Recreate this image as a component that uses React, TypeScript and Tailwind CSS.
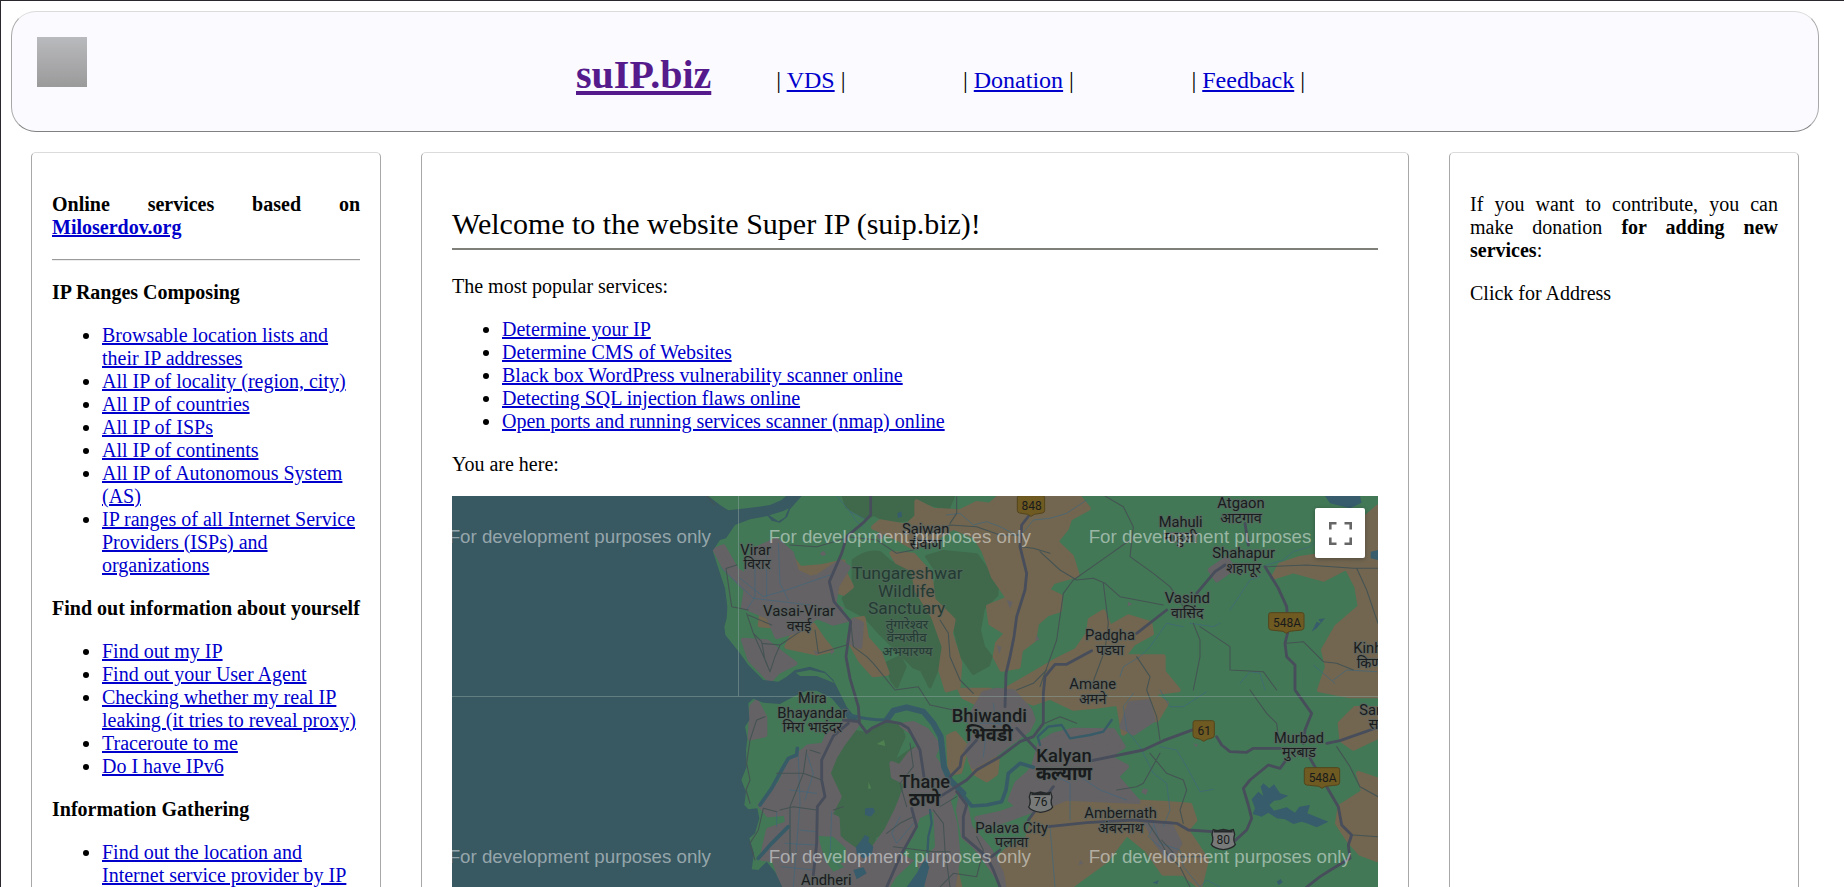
import React from "react";

const link = "text-[#0000cc] underline";

const ipRanges = [
  "Browsable location lists and their IP addresses",
  "All IP of locality (region, city)",
  "All IP of countries",
  "All IP of ISPs",
  "All IP of continents",
  "All IP of Autonomous System (AS)",
  "IP ranges of all Internet Service Providers (ISPs) and organizations",
];
const yourself = [
  "Find out my IP",
  "Find out your User Agent",
  "Checking whether my real IP leaking (it tries to reveal proxy)",
  "Traceroute to me",
  "Do I have IPv6",
];
const gathering = ["Find out the location and Internet service provider by IP"];
const popular = [
  "Determine your IP",
  "Determine CMS of Websites",
  "Black box WordPress vulnerability scanner online",
  "Detecting SQL injection flaws online",
  "Open ports and running services scanner (nmap) online",
];

function Links({ items }: { items: string[] }) {
  return (
    <ul className="mb-5 list-disc pl-[50px]">
      {items.map((t) => (
        <li key={t}>
          <a href="#" className={link}>{t}</a>
        </li>
      ))}
    </ul>
  );
}

const forest = [
  "M430 18H518L560 92 520 72 500 85 440 50Z",
  "M518 18H760L745 55 700 45 655 32 648 85 600 92 560 92Z",
  "M460 212Q500 180 540 188L570 215 620 240 660 285 700 300 715 250 680 200 730 185 830 195 870 250 892 290 890 315 850 355 838 420 850 470 873 500 865 525 820 550 785 500 760 400 720 345 695 390 722 470 715 530 690 590 665 540 640 530 600 490 540 430 495 380 440 350 430 325 460 280Z",
  "M440 720 500 732 560 698 600 705 612 740 590 790 575 830 580 860 620 870 590 960 560 1020 525 1040 515 1075 480 1090 430 1055 412 1020 415 985 395 975 418 920 385 850 405 800 398 755Z",
  "M590 810 640 775 650 800 620 850 595 845Z",
  "M560 520 600 500 615 530 590 590 575 570Z",
];
const brown = [
  "M650 35 700 60 780 65 830 40 870 45 900 18H1135L1165 55 1110 85 1100 115 1068 155 1115 200 1132 255 1060 275 1042 300 1082 320 1080 360 1042 372 1010 400 1002 450 962 480 955 530 905 538 885 500 892 460 920 430 872 400 865 350 925 325 880 260 850 180 825 140 760 112 700 150 640 172 600 150 560 130 520 112 540 95 620 108 650 80Z",
  "M575 190 640 195 690 250 700 330 760 390 752 430 780 520 775 590 740 600 722 540 732 470 700 380 650 300 640 240 590 215Z",
  "M460 390 490 385 500 445 540 490 562 550 520 555 480 510 450 455Z",
  "M255 175 300 235 360 230 430 215 405 250 350 265 290 250Z",
  "M190 335 245 330 250 360 215 390 240 410 180 405Z",
  "M340 405 370 450 395 480 350 490 260 470 285 420Z",
  "M400 300 435 250 455 290 430 310Z",
  "M1130 480 1165 430 1170 390 1210 365 1230 412 1285 380 1350 400 1355 430 1300 460 1270 500 1390 500 1390 545 1435 600 1350 610 1400 640 1370 690 1320 690 1270 730 1255 640 1180 650 1120 655 1050 622 1000 640 950 620 915 600 1010 545 1070 510Z",
  "M2034 50 2000 80 1990 160 1900 190 1800 205 1740 225 1720 262 1780 243 1870 268 1940 232 1970 290 1980 350 1910 410 1870 480 1882 530 1858 600 1950 618H2034Z",
  "M1965 655 1920 700 1925 750 1960 775 2034 740V655Z",
  "M1975 850 2034 870V1110L1980 1090 1945 1050 1912 1000 1920 950 1990 905Z",
  "M1010 955 1100 925 1300 935 1400 940 1470 945 1485 990 1460 1020 1520 1110 1500 1191 1450 1150 1390 1150 1340 1080 1280 1030 1220 1110 1110 1191H920L880 1120 920 1080 980 1050Z",
  "M745 740 765 730 800 770 780 845 750 850Z",
  "M810 810 860 775 892 810 888 850 860 870 825 850Z",
  "M740 1050 770 1060 765 1130 780 1191H740Z",
  "M780 600H870L830 640 790 620Z",
  "M370 770 410 765 395 800Z",
];
const urban = [
  "M160 180 230 150 275 190 290 245 340 268 420 215 445 232 410 290 402 345 440 390 400 400 350 380 300 420 230 440 205 380 130 350 138 300 75 235 45 180 70 170 110 240 135 255 150 215Z",
  "M130 450 200 455 245 490 285 520 235 545 210 572 150 510Z",
  "M155 650 170 635 195 682 195 735 150 745Z",
  "M300 790 325 770 370 765 380 740 440 690 475 700 430 760 405 800 385 850 418 920 390 975 412 985 415 1040 430 1055 480 1090 520 1075 560 1020 590 960 622 880 580 860 575 820 600 830 630 790 660 770 640 730 605 705 640 700 680 720 715 765 700 800 735 850 765 905 745 930 765 1000 775 1100 760 1191H690L640 1160 560 1191H250L222 1110 185 1105 205 1020 262 1000 258 970 205 975 180 945 240 880 268 820Z",
  "M785 900 800 960 810 1010 870 1080 905 1150 912 1191 870 1130 825 1070 790 1040 775 960Z",
  "M850 610 890 600 940 605 990 660 1000 690 985 720 930 760 890 790 820 830 800 780 830 720 805 690Z",
  "M1020 760 1060 735 1120 720 1240 722 1270 770 1225 800 1280 830 1250 860 1315 935 1100 925 1050 945 1000 960 920 990 850 1010 830 985 900 970 955 950 930 930 950 880 985 850 1000 830Z",
  "M1290 640 1345 635 1360 690 1300 730 1265 710Z",
  "M1530 240 1580 205 1600 235 1550 270Z",
  "M1340 1000 1410 1000 1440 1060 1410 1110 1370 1060Z",
  "M460 390 485 400 480 470 445 455Z",
];
const cutouts = [
  "M355 1038 400 1040 438 1075 435 1130 400 1145 375 1110 360 1060Z",
  "M660 985 700 965 705 1070 660 1120 600 1090 640 1040Z",
  "M590 1160 650 1105 665 1191H570Z",
];
const specks = [
  "M330 262l14-10 10 14-12 12zM360 190l12-8 6 12-12 4zM540 128a9 10 0 1 0 1 0zM240 165l16 4-6 14zM415 345l16 8-4 14-14-6z",
  "M340 480l16 8-8 8zM390 478l14 6-10 10zM1285 335l12 8-14 6zM1140 1110l10 10-14 6zM1180 760l24-8 30 20-20 14zM1225 830l26 4-4 22-20-6zM1175 738l20-6 4 18-18 4zM1330 895l14 4-6 16-14-8z",
  "M620 950l18-14 8 22-18 10zM420 1120l18-4v20zM1480 760l14 4-6 8zM920 330l18 6-8 20zM890 465l14 6-6 22zM1010 435l8 14-12 4z",
];
const lakes = [
  "M495 955 520 953 525 965 512 980 495 975Z",
  "M468 1070 485 1050 495 1035 508 1042 505 1055 520 1070 515 1095 490 1105 470 1090Z",
  "M460 1140 490 1132 500 1150 470 1168Z",
  "M1655 928 1675 905 1690 918 1682 890 1690 880 1708 895 1722 883 1740 910 1765 917 1740 930 1722 932 1708 945 1722 962 1760 952 1785 968 1798 950 1830 945 1822 970 1885 995 1850 1012 1820 1000 1805 995 1780 1002 1755 988 1730 985 1705 968 1685 980 1658 972 1665 955Z",
  "M1875 18H1980L1985 38 1950 55 1890 40Z",
  "M1835 425 1850 395 1865 402 1855 388 1875 385 1850 415Z",
  "M2012 185 2034 180V210L2012 205Z",
  "M620 1191 650 1150 672 1110 688 1130 672 1191Z",
  "M592 70l12-6 2 16-12 4zM1730 1175l12-8 6 10-12 8zM1358 1178l18-8-4 12z",
];
const major = [
  "M512 18V75L490 98 440 140 425 190 388 275 402 335 452 395 438 500 450 565 475 650 478 695",
  "M430 690 475 695 500 728 515 715 560 693 600 700 625 715 660 780 672 860",
  "M445 700 400 738 365 810V870L375 920 352 950 350 1060 340 1155",
  "M635 955 650 1010 600 1100 560 1191",
  "M1000 60 965 105 960 170 980 250 975 300 950 380 942 440 930 500 918 550 915 650",
  "M750 860 780 830 785 800 830 750",
  "M720 920 800 870 830 840 900 800 960 755 1000 740 1030 700 1030 610 1035 560 1065 523 1100 523 1175 482M1310 430 1400 360M1490 310 1545 245 1575 225M1645 165 1635 100",
  "M1695 230 1735 295 1760 350 1765 420 1755 460 1760 500 1785 525 1785 600 1835 670 1815 720 1810 760",
  "M1175 812 1330 780 1390 752 1490 715M1550 740 1565 765 1590 785 1640 787 1660 775 1760 775M1880 760 1920 752 2034 712",
  "M1755 815 1740 835 1705 825 1650 870 1630 895 1645 945 1655 985 1640 1020 1605 1052",
  "M1830 805 1880 890 1915 950 1925 1005 1955 1035 1945 1065 1950 1105 1900 1135 1860 1160 1820 1191",
  "M1045 1010 1160 998 1300 990 1430 1000 1465 1020 1540 1025",
  "M770 905 800 945 790 980 790 1040 860 1100 880 1140 900 1191",
  "M950 715 1020 790M985 990 1060 890M875 1100 900 1080",
];
const minor = [
  "M80 235 110 225M78 235 95 350 145 360M140 370 160 430 185 455 195 510 210 545 200 520 160 430M145 375 215 405M210 545 225 500 240 465 300 425M185 460 240 465",
  "M440 140 530 150 590 190 640 180 690 130M690 130 750 105 830 110 900 135 960 135M770 20V70L750 100",
  "M452 395 460 470 500 500 520 520 585 600 655 590M655 590 690 645 760 660",
  "M345 420 355 490 440 465M270 165 350 170 440 145M20 18 45 45",
  "M720 390 745 430 750 500 780 570 820 610",
  "M960 170 1000 175 1050 190M950 600 1000 580 1040 540",
  "M1215 18 1270 50 1300 110 1290 200 1360 250 1410 290 1450 350M1290 150 1220 200 1120 270 1090 310 1070 450 1020 590",
  "M1020 185 1080 240 1130 270 1180 265 1215 280 1260 320 1390 345M1210 280 1225 400 1215 480 1170 600",
  "M1480 400 1500 450 1500 500 1480 600M1500 410 1590 470 1590 540 1690 545 1730 600",
  "M1700 230 1820 225 1960 235 2034 235M1760 460 1810 455 1870 515 1910 520 1960 540M1970 235 2000 300 2034 400",
  "M1310 500 1350 560 1340 600 1370 680 1380 750M1650 600 1700 670 1730 700 1735 740",
  "M1380 790 1330 880 1310 890 1250 900M1350 790 1400 850 1450 870 1460 900 1440 960 1450 1000",
  "M1910 770 1950 830 1980 890 2034 920M1960 1035 2034 1040",
  "M1345 1000 1385 1060 1400 1090 1440 1130 1470 1191M1385 1050 1430 1100 1520 1100",
  "M700 960 730 1000 735 1080 750 1191M580 1070 700 1085 750 1085M720 950 770 920",
  "M195 680 170 690 150 750 140 820 150 870 138 900 150 940M190 955 175 1020 150 1060 165 1110",
  "M240 960 280 950 350 960M230 850 310 850 365 870M190 955 230 965M320 780 310 850 270 950 270 1100M330 780 360 790M400 960 430 950",
  "M630 760 640 830 600 880 620 950M560 1030 600 1000 640 980",
  "M1035 700 1080 680 1130 700M720 1191 760 1150 830 1160 850 1080 830 1040",
];
const streams = [
  "M165 210 165 320 140 360M200 190V320M235 160 240 280 265 330M120 265 190 320 260 300 390 255M160 325 330 345M60 230 160 325",
  "M410 18 450 65 500 90M450 65 470 95 490 110M740 75 780 70 820 105 860 95 900 110 960 140 1000 90 1050 85 1100 70 1160 30",
  "M1260 560 1270 530 1320 500 1350 470 1400 400 1450 410M1470 400 1540 410 1560 400M1590 360 1610 330 1630 300 1650 270 1680 260M1700 225 1750 210 1780 185 1830 170 1860 140",
  "M1620 580 1650 545 1680 550 1695 600M1840 525 1905 580M1900 570 1940 540 2030 545M1380 600 1410 650 1450 650 1520 605",
  "M1300 610 1270 650 1280 720 1320 770 1360 850 1400 880 1410 960 1390 1010M1380 770 1430 780 1460 830 1500 905 1540 898",
  "M1360 1000 1380 1060 1440 1080 1450 1130 1500 1191M1110 990 1110 880 1050 850M1050 1010 1065 1191",
  "M270 960V1100M295 800 300 940 280 1191M320 790 340 850 315 930M270 900 350 910M245 1130 340 1140M1500 1191 1520 1170 1560 1191",
  "M880 640 890 700 940 720M860 720 850 800M840 700 930 700",
  "M230 965V1010M300 1020 345 1025M255 1060 345 1065M395 965 390 1100 420 1130M600 980 575 1030 590 1060 640 1000M1140 860 1200 900 1280 930M1360 1010 1345 1040 1385 1075",
];
const creeks: [string, number][] = [
  ["M450 675Q500 690 560 690", 9],
  ["M560 690 580 662 620 652 670 665 700 700 722 740 732 830 750 870 790 910", 18],
  ["M780 905 815 948 860 945 905 935 918 900 925 850 960 820 1000 832", 11],
  ["M1020 765 1013 740 1045 710 1085 705 1110 745 1170 735 1210 725 1235 690", 7],
  ["M180 945 215 895 245 840 265 805 290 795 292 775", 11],
  ["M175 1105 215 1060 265 1010", 11],
  ["M690 960 695 1000 685 1040 680 1130", 7],
];

const places: [string, string, number, number, number, number, number][] = [
  ["Virar", "विरार", 167, 194, 92, 44, 0],
  ["Vasai-Virar", "वसई", 297, 379, 216, 44, 0],
  ["Saiwan", "सैवाण", 677, 133, 142, 44, 0],
  ["Mahuli", "माहुली", 1442, 112, 132, 44, 0],
  ["Atgaon", "आटगाव", 1623, 55, 142, 44, 0],
  ["Shahapur", "शहापूर", 1631, 205, 188, 44, 0],
  ["Vasind", "वासिंद", 1462, 340, 136, 44, 0],
  ["Padgha", "पडघा", 1230, 451, 150, 44, 0],
  ["Amane", "अमने", 1178, 598, 140, 44, 0],
  ["Murbad", "मुरबाड", 1797, 758, 150, 44, 0],
  ["Ambernath", "अंबरनाथ", 1262, 985, 218, 44, 0],
  ["Palava City", "पलावा", 935, 1028, 218, 44, 0],
  ["Bhayandar", "मिरा भाइंदर", 337, 683, 210, 44, 0],
  ["Bhiwandi", "भिवंडी", 868, 697, 226, 54, 1],
  ["Kalyan", "कल्याण", 1092, 816, 166, 54, 1],
  ["Thane", "ठाणे", 674, 893, 152, 54, 1],
];

const shields: [string, number, number, number][] = [
  ["848", 995, 46, 76],
  ["548A", 1761, 397, 100],
  ["61", 1513, 721, 58],
  ["548A", 1868, 862, 100],
];

function Terrain() {
  return (
    <g>
      <rect x="-744" y="18" width="2778" height="1173" fill="#427856" />
      <g strokeLinejoin="round" strokeWidth="10">
        {forest.map((d, i) => <path key={i} d={d} fill="#40694c" stroke="#40694c" />)}
      </g>
      <g strokeLinejoin="round" strokeWidth="14">
        {brown.map((d, i) => <path key={i} d={d} fill="#726650" stroke="#726650" />)}
        {urban.map((d, i) => <path key={i} d={d} fill="#646265" stroke="#646265" />)}
      </g>
      {cutouts.map((d, i) => <path key={i} d={d} fill="#427856" />)}
      {specks.map((d, i) => <path key={i} d={d} fill="#646265" />)}
      <path fill="#385862" d="M-744 18H25L60 45 85 61 165 52 210 45 245 30 258 18H305L270 58 262 80 240 98 215 92 203 78 150 88 105 105 78 145 60 150 38 182 55 235 75 295 82 350 80 385 73 410 76 435 120 490 145 525 190 570 235 575 260 560 285 540 330 530 375 545 400 570 420 610 440 650 462 678 475 690 445 690 425 660 395 625 350 602 320 602 280 620 240 642 190 638 160 626 145 640 148 690 135 710 142 745 138 780 140 830 124 870 138 905 133 945 145 958 172 955 178 985 165 1030 148 1045 162 1090 155 1138 175 1140 200 1115 225 1145 247 1191H-744Z" />
      <path d="M208 76 250 63 266 55 255 82 235 94ZM287 548 330 540 375 550 405 580 350 558 300 558Z" fill="#427856" />
      {lakes.map((d, i) => <path key={i} d={d} fill="#375c6b" />)}
      <g fill="none" strokeLinejoin="round" strokeLinecap="round">
        {creeks.map(([d, w], i) => <path key={i} d={d} stroke="#375c68" strokeWidth={w} />)}
        {streams.map((d, i) => <path key={i} d={d} stroke="#40667c" strokeWidth="3" opacity=".7" />)}
        {minor.map((d, i) => <path key={i} d={d} stroke="#455353" strokeWidth="3.2" />)}
        {major.map((d, i) => <path key={i} d={d} stroke="#474d5a" strokeWidth="8.5" />)}
      </g>
      <path d="M530 762 552 750 556 768ZM505 875 514 895 505 897Z" fill="#4f8050" />
    </g>
  );
}

function MapView() {
  const halo = { paintOrder: "stroke" } as React.CSSProperties;
  return (
    <svg viewBox="-744 18 2778 1173" className="block h-[391px] w-full" preserveAspectRatio="xMinYMin slice">
      <Terrain />
      <path d="M115.5 18V618M-744 619.5H2034" stroke="#8ba39d" strokeOpacity=".5" strokeWidth="3" fill="none" />
      <g fontFamily="Roboto, 'Noto Sans', sans-serif" textAnchor="middle" fill="#191b1d" stroke="#5c6562" strokeOpacity=".7" strokeWidth="7" strokeLinejoin="round" style={halo}>
        {places.map(([en, hi, x, y, w, size, bold]) => (
          <g key={en} fontWeight={bold ? 500 : 400}>
            <text x={x} y={y} fontSize={size} textLength={w} lengthAdjust="spacingAndGlyphs">{en}</text>
            <text x={en === "Virar" ? x + 4 : x} y={y + (bold ? 55 : 43)} fontSize={bold ? 55 : 43} fontWeight={bold ? 700 : 400}>{hi}</text>
          </g>
        ))}
        <text x="337" y="638" fontSize="44" textLength="86" lengthAdjust="spacingAndGlyphs">Mira</text>
        <text x="379" y="1185" fontSize="44" textLength="152" lengthAdjust="spacingAndGlyphs">Andheri</text>
        <text x="1960" y="490" fontSize="44" textAnchor="start">Kinh</text>
        <text x="1970" y="534" fontSize="43" textAnchor="start">किण</text>
        <text x="1978" y="675" fontSize="44" textAnchor="start">Sar</text>
        <text x="2006" y="716" fontSize="43" textAnchor="start">स</text>
        <g fill="#243a34" fontSize="50" strokeOpacity=".35">
          <text x="622" y="268" textLength="332" lengthAdjust="spacingAndGlyphs">Tungareshwar</text>
          <text x="619" y="320" textLength="170" lengthAdjust="spacingAndGlyphs">Wildlife</text>
          <text x="620" y="373" textLength="232" lengthAdjust="spacingAndGlyphs">Sanctuary</text>
          <g fontSize="40">
            <text x="621" y="416">तुंगारेश्वर</text>
            <text x="620" y="456">वन्यजीव</text>
            <text x="622" y="497">अभयारण्य</text>
          </g>
        </g>
      </g>
      <g fontFamily="Roboto, sans-serif" fontSize="36" textAnchor="middle">
        {shields.map(([t, x, y, w], i) => (
          <g key={i}>
            <path d={`M${x - w / 2 + 5} ${y - 29}h${w - 10}q6 0 6 6v38q0 7-7 8l-${w / 2 - 14} 4-${10} 6-${10}-6-${w / 2 - 14}-4q-7-1-7-8v-38q0-6 6-6Z`} fill="#6f5a22" stroke="#54451c" strokeWidth="3" />
            <text x={x} y={y + 13} fill="#191b1b">{t}</text>
          </g>
        ))}
        {([["76", 1022, 935], ["80", 1570, 1047]] as [string, number, number][]).map(([t, x, y]) => (
          <g key={t}>
            <path d={`M${x - 30} ${y - 28}l12 3 18-4 18 4 12-3 4 14q-6 18 2 30-6 12-36 16-30-4-36-16 8-12 2-30Z`} fill="#777a79" stroke="#25292a" strokeWidth="4" />
            <path d={`M${x - 28} ${y - 23}h56`} stroke="#25292a" strokeWidth="7" />
            <text x={x} y={y + 14} fill="#191b1b">{t}</text>
          </g>
        ))}
      </g>
      <g fontFamily="'Liberation Sans', Arial, sans-serif" fontSize="56.2" fill="#fff" fillOpacity=".48">
        {[159, 1119].map((y) =>
          [-754, 206, 1166].map((x) => (
            <text key={`${x}-${y}`} x={x} y={y}>
              {x === 1166 && y === 159 ? "For development purposes" : "For development purposes only"}
            </text>
          ))
        )}
      </g>
    </svg>
  );
}

function NavItem({ label }: { label: string }) {
  return (
    <span className="whitespace-nowrap">
      | <a href="#" className={link}>{label}</a> |
    </span>
  );
}

const edge = "border border-t-[#dbdbdb] border-x-[#a8a8a8] border-b-[#808080]";
const panel = "rounded-t-[5px] border border-b-0 border-t-[#dbdbdb] border-x-[#a8a8a8]";

export default function App() {
  return (
    <div className="h-[887px] overflow-hidden border-l border-t border-[#2a282c] bg-white pl-[10px] pt-[10px] font-['Liberation_Serif','Times_New_Roman',serif] text-[20px] leading-[23px] text-black">
      <header className={`flex h-[121px] w-[1808px] rounded-[25px] bg-[#fafaff] ${edge}`}>
        <div className="ml-[25px] mt-[25px] size-[50px] shrink-0 bg-linear-to-b from-[#b9babd] to-[#9b9a9b]" />
        <div className="ml-[489px] flex h-[90px] items-baseline pt-[41px] text-[24px] leading-[28px]">
          <h1 className="mr-[65px] text-[40px] font-bold leading-[44px]">
            <a href="#" className="text-[#551a8b] underline decoration-[4px] underline-offset-[3px]">suIP.biz</a>
          </h1>
          <nav className="flex gap-[117.5px]">
            <NavItem label="VDS" />
            <NavItem label="Donation" />
            <NavItem label="Feedback" />
          </nav>
        </div>
      </header>

      <div className="ml-5 mt-5 flex h-[735px] w-[1768px] gap-10">
        <aside className={`w-[350px] shrink-0 px-5 pt-10 ${panel}`}>
          <p className="mb-5 text-justify font-bold">
            Online services based on <a href="#" className={link}>Miloserdov.org</a>
          </p>
          <hr className="mb-5 h-0.5 border-b border-t border-b-[#eeeeee] border-t-[#9a9a9a]" />
          <h2 className="mb-5 font-bold">IP Ranges Composing</h2>
          <Links items={ipRanges} />
          <h2 className="mb-5 whitespace-nowrap font-bold">Find out information about yourself</h2>
          <Links items={yourself} />
          <h2 className="mb-5 font-bold">Information Gathering</h2>
          <Links items={gathering} />
        </aside>

        <main className={`w-[988px] shrink-0 px-[30px] pt-[53px] ${panel}`}>
          <h2 className="mb-[25px] h-[44px] border-b-2 border-[#80807a] text-[30px] leading-[36px]">
            Welcome to the website Super IP (suip.biz)!
          </h2>
          <p className="mb-5">The most popular services:</p>
          <Links items={popular} />
          <p className="mb-5">You are here:</p>
          <div className="relative h-[391px] overflow-hidden">
            <MapView />
            <button className="absolute right-[13px] top-3 flex size-[50px] items-center justify-center rounded-[2px] bg-white shadow-[0_1px_4px_rgba(0,0,0,0.3)]">
              <svg viewBox="0 0 23 23" className="size-[23px]" fill="none" stroke="#666" strokeWidth="2.6">
                <path d="M1.3 7.5V1.3H7.5M15.5 1.3H21.7V7.5M21.7 15.5V21.7H15.5M7.5 21.7H1.3V15.5" />
              </svg>
            </button>
          </div>
        </main>

        <aside className={`w-[350px] shrink-0 px-5 pt-10 ${panel}`}>
          <p className="mb-5 text-justify">
            If you want to contribute, you can make donation <b>for adding new services</b>:
          </p>
          <p>Click for Address</p>
        </aside>
      </div>
    </div>
  );
}
